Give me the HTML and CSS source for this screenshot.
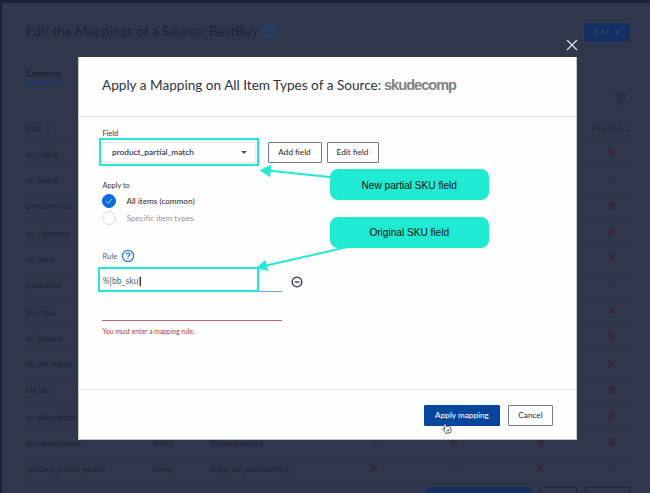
FILE: index.html
```
<!DOCTYPE html>
<html lang="en">
<head>
<meta charset="utf-8">
<title>Edit the Mappings of a Source</title>
<link rel="stylesheet" href="styles.css">
</head>
<body>
<svg class="defs" width="0" height="0" aria-hidden="true">
  <symbol id="x" viewBox="0 0 10 10"><path d="M1.5 1.5l7 7M8.5 1.5l-7 7"/></symbol>
  <symbol id="check" viewBox="0 0 10 10"><path d="M1.3 5.4l2.5 2.3 5-5.1"/></symbol>
  <symbol id="sort" viewBox="0 0 6 8"><path d="M1 3l2-2 2 2M1 5l2 2 2-2"/></symbol>
  <symbol id="help" viewBox="0 0 14 14"><circle cx="7" cy="7" r="5.6"/><path d="M5.2 5.6c0-2.4 3.6-2.3 3.6-.2 0 1.4-1.8 1.3-1.8 2.7M7 9.2v1"/></symbol>
</svg>
<div class="page">
  <header class="page-head">
    <h1>Edit the Mappings of a Source: BestBuy</h1>
    <svg class="page-help"><use href="#help"/></svg>
    <div class="add">Add<i class="caret"></i></div>
  </header>
  <nav class="tabs"><span class="tab">Common</span></nav>
  <div class="filter"><svg viewBox="0 0 12 12"><path d="M1 2.2c0-1.6 10-1.6 10 0L7.5 7v3.2L4.7 11V7zM1 2.2c1 1.3 9 1.3 10 0"/></svg></div>
  <div class="table">
    <div class="row head"><span>Field <svg class="sort"><use href="#sort"/></svg></span><span class="free">Free Text <svg class="sort"><use href="#sort"/></svg></span></div>
    <div class="row"><span>ec_rating</span><svg class="no last"><use href="#x"/></svg></div>
    <div class="row"><span>ec_brand</span><svg class="yes last"><use href="#check"/></svg></div>
    <div class="row"><span>permanentid</span><svg class="no last"><use href="#x"/></svg></div>
    <div class="row"><span>ec_category</span><svg class="no last"><use href="#x"/></svg></div>
    <div class="row"><span>ec_price</span><svg class="no last"><use href="#x"/></svg></div>
    <div class="row"><span>partialsku</span><svg class="yes last"><use href="#check"/></svg></div>
    <div class="row"><span>bb_class</span><svg class="no last"><use href="#x"/></svg></div>
    <div class="row"><span>ec_images</span><svg class="no last"><use href="#x"/></svg></div>
    <div class="row"><span>bb_mf_name</span><svg class="no last"><use href="#x"/></svg></div>
    <div class="row"><span>bb_sku</span><svg class="no last"><use href="#x"/></svg></div>
    <div class="row"><span>ec_description</span><svg class="no last"><use href="#x"/></svg></div>
    <div class="row"><span>bb_department</span><span>String</span><span>%[department]</span><svg class="yes"><use href="#check"/></svg><svg class="no"><use href="#x"/></svg><svg class="no"><use href="#x"/></svg><svg class="no"><use href="#x"/></svg></div>
    <div class="row"><span>product_partial_match</span><span>String</span><span>%[bb_mf_partnumber]</span><svg class="no"><use href="#x"/></svg><svg class="yes"><use href="#check"/></svg><svg class="no"><use href="#x"/></svg><svg class="yes"><use href="#check"/></svg></div>
  </div>
  <div class="page-actions"><b></b><i></i><i class="wide"></i></div>
</div>

<svg class="close" viewBox="0 0 12 12"><path d="M1 1l10 10M11 1L1 11"/></svg>
<section class="modal">
  <header class="modal-head"><h2>Apply a Mapping on All Item Types of a Source:</h2><strong>skudecomp</strong></header>
  <div class="modal-body">
    <div class="label">Field</div>
    <div class="field-line">
      <div class="mark select-mark"><div class="select">product_partial_match<i class="caret"></i></div></div>
      <button class="btn add-field">Add field</button>
      <button class="btn edit-field">Edit field</button>
    </div>
    <div class="label apply-label">Apply to</div>
    <div class="radio on"><span class="dot"><svg><use href="#check"/></svg></span><span>All items (common)</span></div>
    <div class="radio"><span class="dot"></span><span>Specific item types</span></div>
    <div class="rule-label"><span>Rule</span><svg><use href="#help"/></svg></div>
    <div class="rule-line">
      <div class="input"><div class="mark rule-mark"><span>%[bb_sku]</span><i class="text-cursor"></i></div></div>
      <svg class="minus" viewBox="0 0 12 12"><circle cx="6" cy="6" r="4.8"/><path d="M3.6 6h4.8"/></svg>
    </div>
    <div class="empty-input"></div>
    <div class="error">You must enter a mapping rule.</div>
  </div>
  <footer class="modal-foot">
    <button class="btn primary">Apply mapping</button>
    <button class="btn cancel">Cancel</button>
  </footer>
</section>

<svg class="arrows" viewBox="0 0 650 493">
  <path class="shaft" d="M270 170.8L332 177.2M265 265.8L354 245.6"/>
  <path class="tip" d="M259.5 170.2L271.3 164.8 270.2 177.2zM256.2 268L265.4 259.8 267.8 271z"/>
</svg>
<div class="callout one">New partial SKU field</div>
<div class="callout two">Original SKU field</div>
<svg class="hand" viewBox="0 0 10 11"><path d="M2.2 1.2c.8-.8 1.4 0 1.6.6l.7 2c.4-.7 1-.7 1.4-.2.5-.5 1-.3 1.3.2.6-.3 1.2 0 1.3.7.5 2 .8 3 .2 5.2l-4.5.6C3.3 9 1.5 7.7.8 6.4c-.3-.9.7-1.2 1.4-.6l.8.7L1.900 2.300q-.1-.7.3-1.100zM5 6.500v2M6.600 6.300v2"/></svg>
</body>
</html>
```
FILE: styles.css
```
* { box-sizing: border-box; }
body {
  margin: 0; width: 650px; height: 493px; overflow: hidden;
  position: relative; background: #1a223a;
  font-family: Lato, "Liberation Sans", sans-serif; font-size: 8px;
}
svg { display: block; fill: none; stroke: currentColor; flex: none; }
.defs { position: absolute; }
h1, h2 { margin: 0; font-weight: 400; white-space: nowrap; }

.page {
  margin: 3px 0 0 2px; height: 490px; padding: 17px 20px 0 24px;
  background: #30364c; color: #1c2338; overflow: hidden;
}
.page-head { display: flex; align-items: center; height: 21px; }
h1 { width: 236px; font-size: 13.45px; }
.page-help { width: 14px; height: 14px; color: #1d4a8a; stroke-width: 1.3; }
.add {
  margin: 3px 0 0 auto; width: 46px; height: 19px; background: #142f61; color: #32456c;
  display: flex; align-items: center; justify-content: center; gap: 6px;
}
.caret { border: 3px solid transparent; border-top-color: currentColor; border-bottom: 0; }
.tabs { height: 43px; padding-top: 27px; }
.tab {
  display: block; width: 35px; height: 16px; border-bottom: 2px solid #193a70;
  font-size: 8.6px; font-weight: 700; line-height: 12px;
}
.filter { height: 30px; padding: 9px 3px 0 0; display: flex; justify-content: flex-end; color: #20273a; }
.filter svg { width: 12px; height: 12px; }
.row {
  height: 26.32px; display: grid; align-items: center;
  grid-template-columns: 126px 58px 123px 80px 80px 94px 48px;
  border-bottom: 1px solid #2e344a; white-space: nowrap; font-size: 8.1px;
}
.row > svg { width: 9px; height: 9px; justify-self: center; margin-bottom: 2px; }
.row > .last { grid-column: 7; }
.row.head { height: 27px; padding-top: 3px; font-size: 7.2px; }
.head span { display: flex; align-items: center; gap: 4px; }
.head .free { grid-column: 7; margin-left: 5px; }
.sort { width: 5px; height: 7px; stroke-width: 1; }
.no { color: #3b1d35; stroke-width: 1.3; }
.yes { color: #1d3845; stroke-width: 1.4; }
.page-actions { display: flex; gap: 8px; margin: 4px 0 0 400px; }
.page-actions b { width: 106px; height: 20px; background: #142f61; }
.page-actions i { width: 37px; height: 20px; border: 1px solid #20273d; }
.page-actions .wide { width: 45px; }

.close { position: absolute; left: 566px; top: 39px; width: 12px; height: 12px; color: #dde0e8; stroke-width: 1.3; }
.modal {
  position: absolute; left: 78px; top: 57px; width: 499px; height: 383px;
  background: #fefefe; border: 1px solid #c4c7d0; border-top: 0;
  color: #30333f; display: flex; flex-direction: column;
}
.modal-head {
  height: 60px; padding: 0 0 3px 23px; border-bottom: 1px solid #e4e5e9;
  display: flex; align-items: center;
}
h2 { width: 282px; font-size: 13.6px; color: #30323c; }
.modal-head strong {
  font: 700 14.5px "Liberation Sans", Arial, sans-serif; color: #808080; letter-spacing: -.95px;
}
.modal-body { height: 273px; padding: 11px 0 0 23.4px; }
.label { height: 10px; line-height: 11px; font-size: 7.4px; }
.field-line { display: flex; align-items: center; height: 28px; margin-left: -3.4px; }
.mark { border: 2px solid #20ebd2; }
.select-mark { width: 160px; height: 28px; padding: 2px 1px; margin-right: 8.5px; }
.select {
  height: 21px; border: 1px solid #e8e8ec; padding: 0 8px 0 9px;
  display: flex; align-items: center; justify-content: space-between;
  color: #252640; font-size: 8.3px; font-weight: 500;
}
.select .caret { color: #555566; }
.btn {
  height: 21px; padding: 0 0 1px; border: 1px solid #77768a; border-radius: 1px;
  background: #fff; color: #343348; font: 500 8.2px Lato, sans-serif; white-space: nowrap;
}
.field-line .btn { margin-top: 1px; }
.add-field { width: 54px; margin-right: 5px; }
.edit-field { width: 52px; }
.apply-label { margin-top: 14px; margin-bottom: 3px; }
.radio { height: 17px; display: flex; align-items: center; gap: 10px; color: #91919b; font-size: 8.2px; }
.radio.on { color: #262835; }
.dot { width: 14px; height: 14px; border: 1px solid #d8d8df; border-radius: 50%; }
.on .dot { background: #0868e0; border-color: #0868e0; color: #fff; display: grid; place-items: center; }
.dot svg { width: 8px; height: 8px; }
.rule-label { margin-top: 22px; height: 14px; display: flex; align-items: center; color: #62626c; font-size: 7.8px; }
.rule-label span { width: 19px; }
.rule-label svg { width: 14px; height: 14px; color: #227fdd; stroke-width: 1.3; }
.rule-line { display: flex; align-items: center; margin-top: 4px; }
.input { width: 180px; height: 25px; border-bottom: 1px solid #78acdf; }
.rule-mark { margin-left: -4px; width: 161px; height: 25px; padding: 4px 0 0 2px; display: flex; align-items: center; color: #4b6373; font-size: 8.6px; }
.text-cursor { width: 1px; height: 9px; background: #303847; margin-left: -1px; }
.minus { width: 12px; height: 12px; margin: 5px 0 0 9px; color: #303048; stroke-width: 1.3; }
.empty-input { width: 180px; height: 29px; border-bottom: 1px solid #b9696b; }
.error { margin-top: 5px; color: #b3393d; font-size: 6.8px; line-height: 10px; }
.modal-foot {
  height: 50px; border-top: 1px solid #e4e5e9; padding: 15px 23px 0 0;
  display: flex; justify-content: flex-end; gap: 8px;
}
.primary { width: 76px; background: #05459b; border-color: #05459b; color: #fff; }
.cancel { width: 45px; }

.arrows { position: absolute; inset: 0; width: 650px; height: 493px; color: #20ebd2; }
.shaft { stroke-width: 2; }
.tip { fill: #20ebd2; stroke: none; }
.callout {
  position: absolute; left: 330px; width: 158.5px; height: 31px; border-radius: 8px;
  background: #20ebd2; color: #03100f; text-align: center; line-height: 32px;
  font-family: "Liberation Sans", Arial, sans-serif; font-size: 10.1px;
}
.one { top: 169px; line-height: 33px; }
.two { top: 216.5px; }
.hand { position: absolute; left: 442px; top: 423px; width: 10px; height: 11px; color: #333; stroke-width: .8; }
.hand path { fill: #fff; }
```
